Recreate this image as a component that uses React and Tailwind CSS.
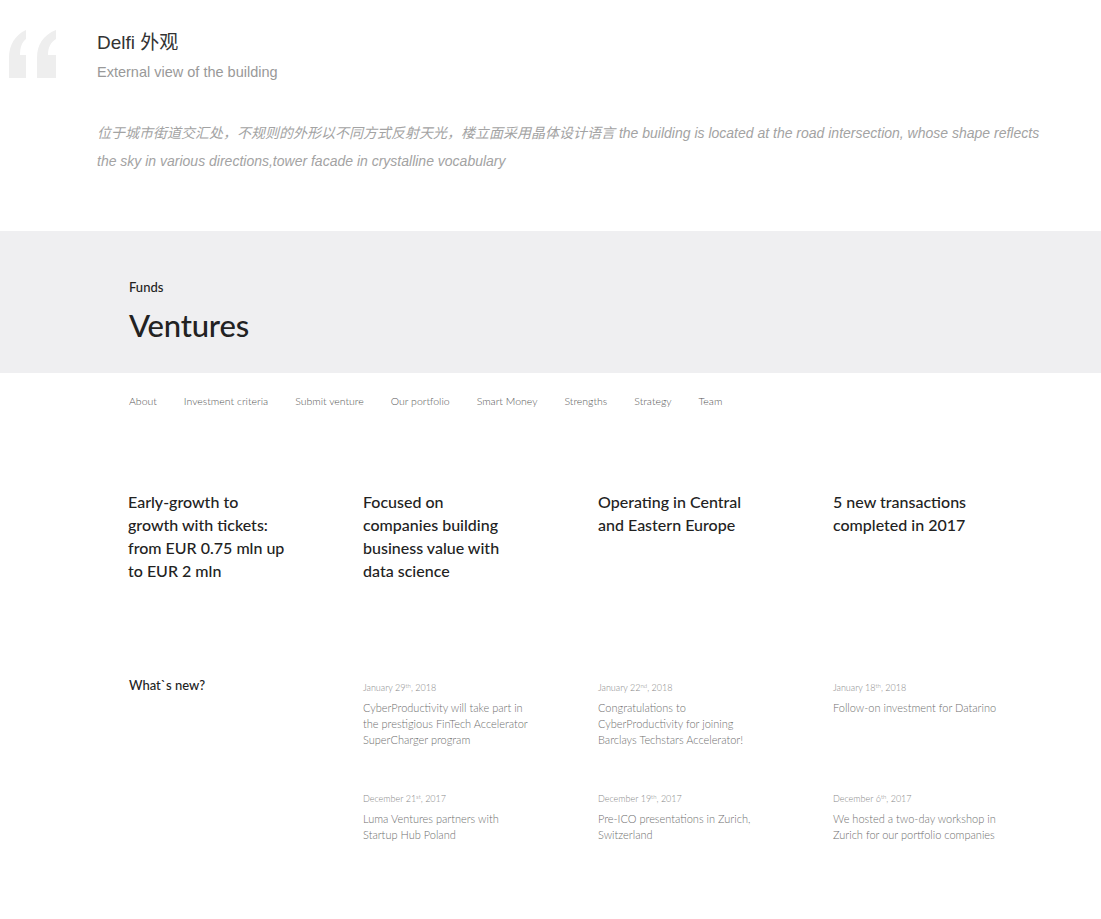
import React from 'react';

const features = [
    ['Early-growth to', 'growth with tickets:', 'from EUR 0.75 mln up', 'to EUR 2 mln'],
    ['Focused on', 'companies building', 'business value with', 'data science'],
    ['Operating in Central', 'and Eastern Europe'],
    ['5 new transactions', 'completed in 2017'],
];

const news = [
    [
        { month: 'January', day: '29', sup: 'th', year: '2018', lines: ['CyberProductivity will take part in', 'the prestigious FinTech Accelerator', 'SuperCharger program'] },
        { month: 'January', day: '22', sup: 'nd', year: '2018', lines: ['Congratulations to', 'CyberProductivity for joining', 'Barclays Techstars Accelerator!'] },
        { month: 'January', day: '18', sup: 'th', year: '2018', lines: ['Follow-on investment for Datarino'] },
    ],
    [
        { month: 'December', day: '21', sup: 'st', year: '2017', lines: ['Luma Ventures partners with', 'Startup Hub Poland'] },
        { month: 'December', day: '19', sup: 'th', year: '2017', lines: ['Pre-ICO presentations in Zurich,', 'Switzerland'] },
        { month: 'December', day: '6', sup: 'th', year: '2017', lines: ['We hosted a two-day workshop in', 'Zurich for our portfolio companies'] },
    ],
];

const nav = ['About', 'Investment criteria', 'Submit venture', 'Our portfolio', 'Smart Money', 'Strengths', 'Strategy', 'Team'];

const QuoteMark = () => (
    <svg width="62" height="52" viewBox="0 28 62 52" className="shrink-0">
        <path d="M9 78 V58 C9 45 15 35 26 30 V39 C22 42 20 47 20 55 H26 V78 Z" fill="#eeeeee" />
        <path d="M37 78 V58 C37 45 43 35 56 30 V39 C51 42 48 47 48 55 H56 V78 Z" fill="#eeeeee" />
    </svg>
);

const NewsItem = ({ item }) => (
    <div>
        <div className="text-[9px] leading-[12px] text-[#888] font-light">
            {item.month} {item.day}<sup className="text-[6px]">{item.sup}</sup>, {item.year}
        </div>
        <div className="mt-[6px] text-[11px] leading-[16px] text-[#6f6f6f] font-light">
            {item.lines.map((l) => <div key={l}>{l}</div>)}
        </div>
    </div>
);

export default function App() {
    return (
        <div className="w-[1101px] min-h-[919px] bg-white font-['Lato',sans-serif]">
            {/* quote block */}
            <div className="h-[231px] relative pt-[31px] pl-[97px] font-['Liberation_Sans','Noto_Sans_CJK_SC',sans-serif]">
                <div className="absolute left-0 top-[28px]"><QuoteMark /></div>
                <div className="text-[19px] leading-[24px] text-[#333]">Delfi 外观</div>
                <div className="mt-[8px] text-[14.5px] leading-[18px] text-[#999]">External view of the building</div>
                <p className="mt-[38px] w-[960px] italic text-[14px] leading-[28px] text-[#a3a3a3]">
                    位于城市街道交汇处，不规则的外形以不同方式反射天光，楼立面采用晶体设计语言 the building is located at the road intersection, whose shape reflects the sky in various directions,tower facade in crystalline vocabulary
                </p>
            </div>

            {/* band */}
            <div className="h-[142px] bg-[#efeff1] pl-[129px] pt-[48px]">
                <div className="text-[13px] leading-[16px] text-[#222] font-medium">Funds</div>
                <div className="mt-[12px] text-[31px] leading-[36px] text-[#222] font-medium tracking-[-0.2px]">Ventures</div>
            </div>

            {/* nav */}
            <div className="pl-[129px] pt-[21px] flex gap-[27px] text-[10.5px] leading-[14px] text-[#555] font-light">
                {nav.map((n) => <span key={n}>{n}</span>)}
            </div>

            {/* features */}
            <div className="pl-[128px] mt-[82px] grid grid-cols-[235px_235px_235px_235px]">
                {features.map((f, i) => (
                    <div key={i} className="text-[16px] leading-[23px] text-[#222] font-medium">
                        {f.map((l) => <div key={l}>{l}</div>)}
                    </div>
                ))}
            </div>

            {/* news */}
            <div className="pl-[128px] mt-[100px] grid grid-cols-[235px_235px_235px_235px]">
                <div className="pl-px text-[13px] leading-[16px] text-[#222] font-medium -mt-[5px]">What`s new?</div>
                <div className="col-span-3 grid grid-cols-[235px_235px_235px] gap-y-[45px]">
                    {news.flat().map((n, i) => (
                        <div key={i} className={i < 3 ? 'h-[66px]' : ''}><NewsItem item={n} /></div>
                    ))}
                </div>
            </div>
        </div>
    );
}
